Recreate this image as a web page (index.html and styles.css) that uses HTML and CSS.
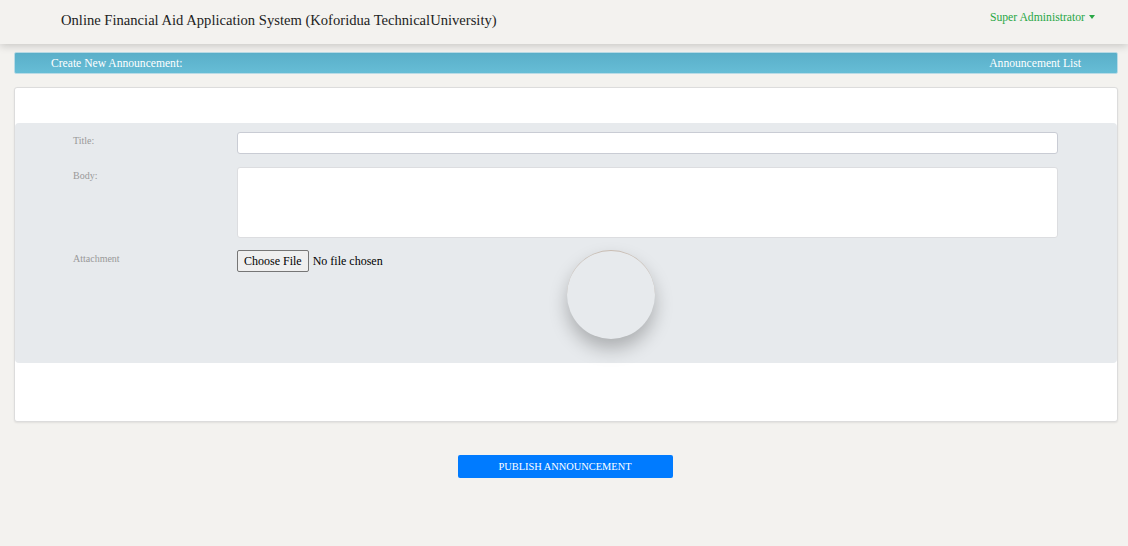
FILE: index.html
```html
<!DOCTYPE html>
<html>
<head>
<meta charset="utf-8">
<link rel="stylesheet" href="styles.css">
</head>
<body>
<header class="topbar">
  <div class="brand">Online Financial Aid Application System (Koforidua TechnicalUniversity)</div>
  <div class="user">Super Administrator <span class="caret"></span></div>
</header>
<main class="content">
  <div class="bluebar">
    <span>Create New Announcement:</span>
    <span>Announcement List</span>
  </div>
  <div class="card">
    <div class="card-top"></div>
    <div class="formarea">
      <div class="row">
        <label class="lbl">Title:</label>
        <input class="field" type="text">
      </div>
      <div class="row">
        <label class="lbl">Body:</label>
        <textarea class="field area"></textarea>
      </div>
      <div class="row att">
        <label class="lbl">Attachment</label>
        <div class="filebox">
          <input class="file" type="file">
          <div class="circle"></div>
        </div>
      </div>
    </div>
    <div class="card-bottom"></div>
  </div>
  <div class="actions">
    <button class="publish">PUBLISH ANNOUNCEMENT</button>
  </div>
</main>
</body>
</html>
```
FILE: styles.css
```css
* { box-sizing: border-box; }
html, body { margin: 0; padding: 0; }
body {
  background: #f3f2ef;
  font-family: "Liberation Serif", "Times New Roman", serif;
  width: 1128px;
  height: 546px;
  overflow: hidden;
}
.topbar {
  height: 44px;
  background: #f3f2ef;
  box-shadow: 0 2px 8px rgba(0,0,0,0.18);
  display: flex;
  justify-content: space-between;
  align-items: flex-start;
  padding: 0 33px 0 61px;
  position: relative;
}
.brand {
  font-size: 14.6px;
  color: #222;
  margin-top: 12px;
}
.user {
  font-size: 11.7px;
  color: #28a745;
  margin-top: 11px;
  display: flex;
  align-items: center;
  gap: 4px;
}
.caret {
  width: 0; height: 0;
  border-left: 3.5px solid transparent;
  border-right: 3.5px solid transparent;
  border-top: 4px solid #28a745;
  margin-top: -2px;
}
.content {
  padding: 8px 10px 0 14px;
}
.bluebar {
  height: 22px;
  background: linear-gradient(#5aafc9, #66bdd6);
  border: 1px solid #b9dbe6;
  border-radius: 2px;
  display: flex;
  justify-content: space-between;
  align-items: center;
  padding: 0 36px 0 36px;
  color: #fff;
  font-size: 11.6px;
}
.card {
  margin-top: 13px;
  background: #fff;
  border: 1px solid #dcdcdc;
  border-radius: 3px;
  box-shadow: 0 1px 2px rgba(0,0,0,0.08);
  height: 335px;
}
.card-top { height: 35px; }
.formarea {
  background: #e7eaed;
  border-radius: 4px;
  height: 240px;
  padding: 9px 59px 0 58px;
}
.row {
  display: flex;
  align-items: flex-start;
  margin-bottom: 13px;
}
.row:nth-child(2) { margin-bottom: 12px; }
.lbl {
  width: 164px;
  font-size: 10px;
  color: #999;
  padding-top: 3px;
}
.field {
  flex: 1;
  height: 22px;
  border: 1px solid #c9ccd4;
  border-radius: 3px;
  background: #fff;
  font-family: inherit;
}
.area {
  height: 71px;
  resize: none;
  border-color: #dcdde0;
}
.att .lbl { padding-top: 3px; }
.filebox {
  flex: 1;
  position: relative;
}
.file {
  font-family: "Liberation Serif", serif;
  font-size: 12px;
  color: #000;
  height: 22px;
}
.file::file-selector-button {
  font-family: "Liberation Serif", serif;
  font-size: 12px;
  height: 22px;
  padding: 0 6px;
  margin-right: 4px;
  border: 1px solid #767676;
  border-radius: 2px;
  background: #efefef;
  color: #000;
}
.circle {
  position: absolute;
  left: 330px;
  top: 0;
  width: 88px;
  height: 89px;
  border-radius: 50%;
  background: #e7eaed;
  border-top: 1px solid #c9bdb3;
  box-shadow: 0 10px 18px rgba(0,0,0,0.25);
}
.actions {
  display: flex;
  justify-content: center;
  margin-top: 33px;
}
.publish {
  width: 215px;
  height: 23px;
  background: #007bff;
  color: #fff;
  border: none;
  border-radius: 2px;
  font-family: "Liberation Serif", serif;
  font-size: 10.4px;
  margin-right: 2px;
}
```
